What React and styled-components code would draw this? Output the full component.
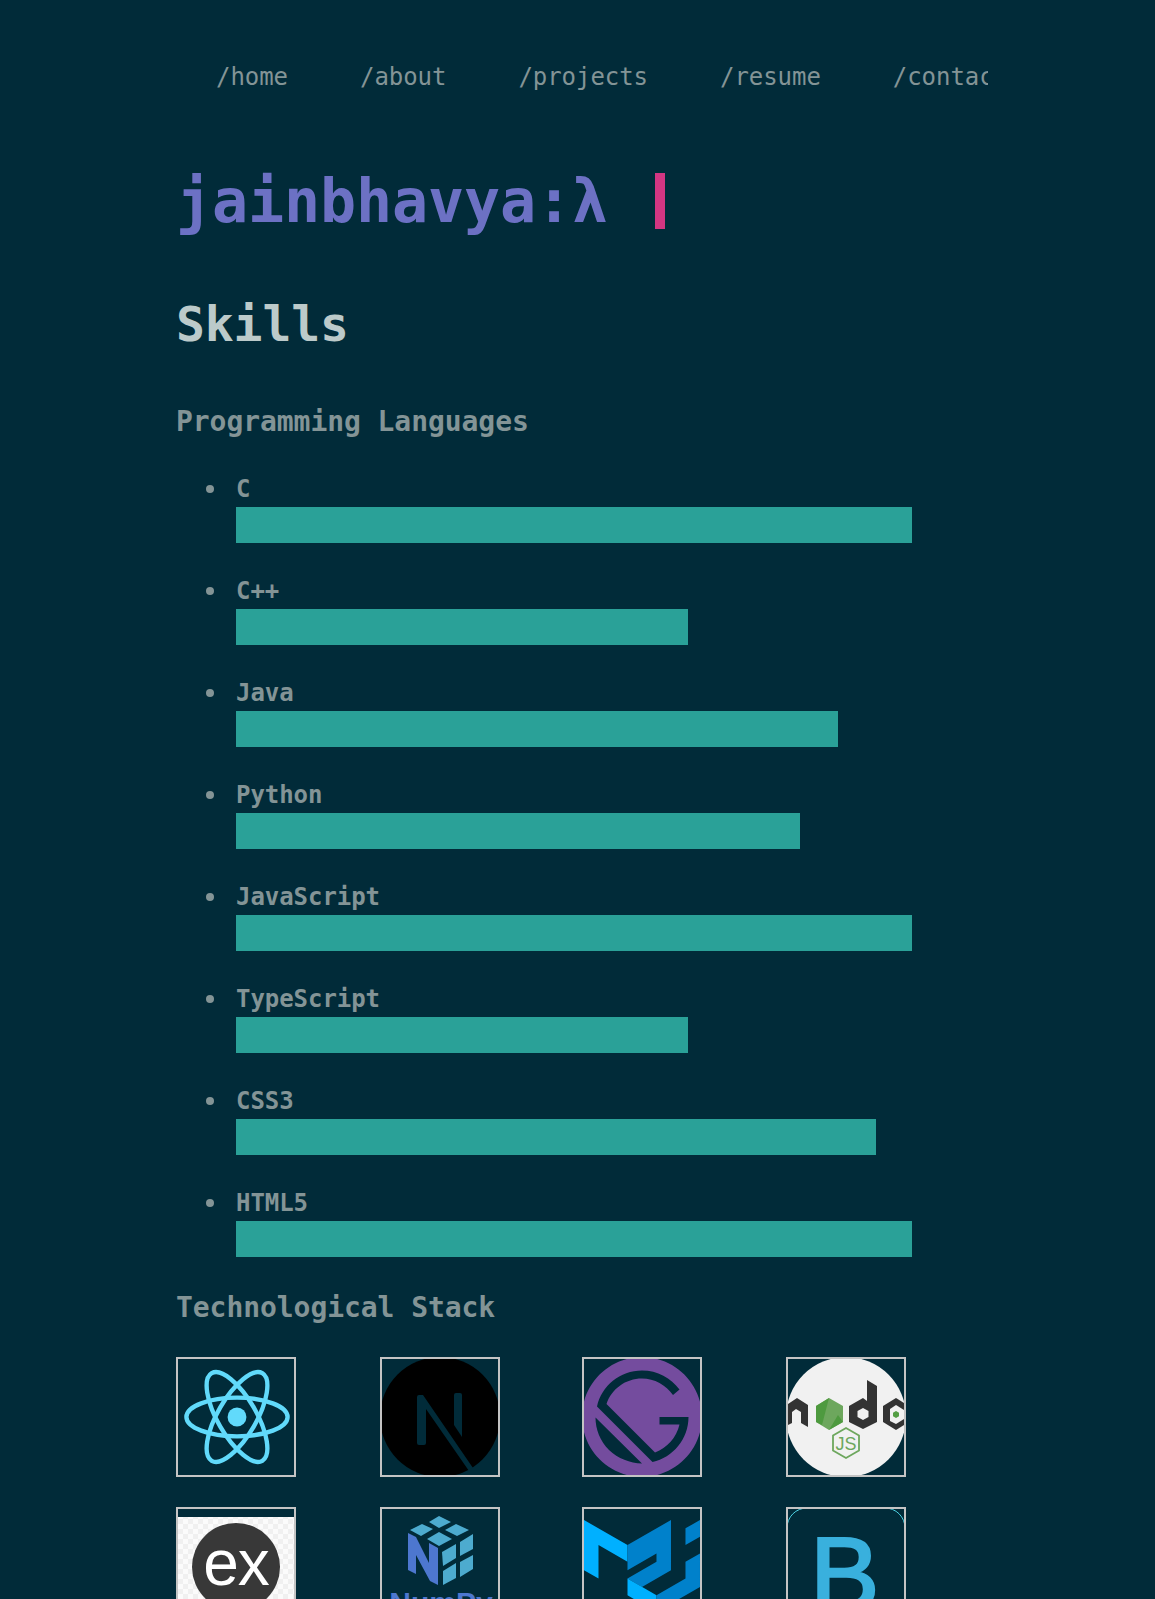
import React from 'react';
import styled, { createGlobalStyle } from 'styled-components';

const BG = '#012b39';

const GlobalStyle = createGlobalStyle`
  html, body {
    margin: 0;
    padding: 0;
    background: ${BG};
  }
`;

const Page = styled.div`
  height: 1599px;
  overflow: hidden;
  padding-left: 176px;
  box-sizing: border-box;
  font-family: "DejaVu Sans Mono", "Liberation Mono", monospace;
  background: ${BG};
`;

const Nav = styled.nav`
  display: flex;
  width: 808px;
  margin-left: 4px;
  padding-top: 60px;
  overflow: hidden;
  white-space: nowrap;
`;

const NavLink = styled.a`
  flex: none;
  padding: 0 36px;
  font-size: 24px;
  line-height: 34px;
  letter-spacing: -0.05px;
  color: #839496;
`;

const Title = styled.h1`
  display: flex;
  align-items: center;
  margin: 76px 0 0;
  height: 62px;
  font-size: 60px;
  font-weight: 700;
  line-height: 62px;
  letter-spacing: -0.12px;
  color: #6c71c4;
`;

const Cursor = styled.span`
  width: 10px;
  height: 56px;
  margin-left: 47px;
  background: #d33682;
`;

const SectionTitle = styled.h2`
  margin: 64px 0 0;
  font-size: 48px;
  font-weight: 700;
  line-height: 56px;
  letter-spacing: -0.1px;
  color: #bccaca;
`;

const SubTitle = styled.h3`
  margin: ${({ $top }) => $top}px 0 0;
  font-size: 28px;
  font-weight: 700;
  line-height: 36px;
  letter-spacing: -0.06px;
  color: #839496;
`;

const SkillList = styled.ul`
  width: 736px;
  margin: 32px 0 0;
  padding: 0 0 0 60px;
  box-sizing: border-box;
  list-style: none;
  color: #839496;
`;

const SkillItem = styled.li`
  position: relative;
  height: 102px;
  font-size: 24px;
  font-weight: 700;
  line-height: 34px;
  letter-spacing: -0.05px;

  &::before {
    content: "";
    position: absolute;
    left: -30px;
    top: 13px;
    width: 8px;
    height: 8px;
    border-radius: 50%;
    background: #839496;
  }
`;

const Bar = styled.div`
  height: 36px;
  margin-top: 1px;
  background: #2aa198;
`;

const IconGrid = styled.div`
  display: grid;
  grid-template-columns: 204px 202px 204px 120px;
  row-gap: 30px;
  margin-top: 31px;
`;

const IconBox = styled.div`
  width: 120px;
  height: 120px;
  box-sizing: border-box;
  border: 2px solid #c4c4c4;
  overflow: hidden;
`;

const Glyph = styled.svg`
  display: block;
  width: 116px;
  height: 116px;
`;

const ReactLogo = () => (
  <Glyph viewBox="0 0 116 116">
    <g transform="translate(59 58) scale(4.6)" fill="none" stroke="#61dafb" strokeWidth="0.95">
      <circle r="2.05" fill="#61dafb" stroke="none" />
      <ellipse rx="11" ry="4.2" />
      <ellipse rx="11" ry="4.2" transform="rotate(60)" />
      <ellipse rx="11" ry="4.2" transform="rotate(120)" />
    </g>
  </Glyph>
);

const NextLogo = () => (
  <Glyph viewBox="0 0 116 116">
    <circle cx="58" cy="58" r="60" fill="#000" />
    <path d="M35 38a2 2 0 0 1 2-2h4l50 73-4 3-43-62v34a2 2 0 0 1-2 2h-5a2 2 0 0 1-2-2z" fill={BG} />
    <path d="M72 36a2 2 0 0 1 2-2h4a2 2 0 0 1 2 2v42l-8-12z" fill={BG} />
  </Glyph>
);

const GatsbyLogo = () => (
  <Glyph viewBox="0.4 0.4 23.2 23.2">
    <path
      fill="#744c9e"
      d="M12 0C5.4 0 0 5.4 0 12s5.4 12 12 12 12-5.4 12-12S18.6 0 12 0zm-6.6 18.6C3.6 16.8 2.7 14.4 2.7 12.1l9.3 9.2c-2.4-.1-4.8-1-6.6-2.7zm8.7 2.4L3 9.9c.9-4.1 4.6-7.2 9-7.2 3.1 0 5.8 1.5 7.5 3.8l-1.3 1.1C16.8 5.6 14.5 4.3 12 4.3c-3.3 0-6.1 2.1-7.1 5.1l9.7 9.7c2.4-.9 4.3-3 4.9-5.6h-4V12h5.8c0 4.4-3.1 8.1-7.2 9z"
    />
  </Glyph>
);

const NodeLogo = () => (
  <Glyph viewBox="0 0 116 116">
    <circle cx="58" cy="58" r="60" fill="#f1f1f1" />
    {/* n */}
    <path fill="#333" d="M0 45l9-6 11 7v22l-7-4V53l-5-3-4 3v11l-4 2z" />
    {/* green hexagon */}
    <path fill="#6da75d" d="M41 39l14 8v16l-14 8-13-8V47z" />
    <path fill="#4e9a3f" d="M41 39L28 47v16l6 3z" />
    <path fill="#4e9a3f" d="M41 71l14-8-5-7z" />
    {/* d */}
    <path fill="#333" fillRule="evenodd" d="M79 21l10 6v36l-14 7-14-7V47l14-8 4 3zM75 49l-5.500 3v6l5.500 3 5.500-3v-6z" />
    {/* e */}
    <path fill="#333" d="M108 39l8 5v22l-8 5-13-8V47z" />
    <path fill="#f1f1f1" d="M102 50l6-4 8 5v9l-8 5-6-3z" />
    <path fill="#539e43" d="M108 52l3 1.700v3.600l-3 1.700-3-1.700v-3.600z" />
    {/* JS badge */}
    <path fill="none" stroke="#6da75d" strokeWidth="1.800" d="M58 69l13 7.500v15L58 99l-13-7.500v-15z" />
    <text x="58" y="91" textAnchor="middle" fontFamily="Liberation Sans, sans-serif" fontSize="18" fill="#6da75d">JS</text>
  </Glyph>
);

const ExpressLogo = () => (
  <Glyph viewBox="0 0 116 116">
    <defs>
      <pattern id="checks" width="10" height="10" patternUnits="userSpaceOnUse">
        <rect width="10" height="10" fill="#fbfbfb" />
        <rect width="5" height="5" fill="#f0f0f0" />
        <rect x="5" y="5" width="5" height="5" fill="#f0f0f0" />
      </pattern>
    </defs>
    <rect y="8" width="116" height="100" fill="url(#checks)" />
    <circle cx="58" cy="58" r="44" fill="#383838" />
    <text x="58" y="76" textAnchor="middle" fontFamily="Liberation Sans, sans-serif" fontSize="64" letterSpacing="-1" fill="#fff">ex</text>
  </Glyph>
);

const NumpyLogo = () => (
  <Glyph viewBox="0 0 116 116">
    <g fill="#4dabcf">
      <path d="M57 7l12 6-12 6-10-6z" />
      <path d="M40 15l11 5-12 7-11-6z" />
      <path d="M74 15l13 6-12 6-12-6z" />
      <path d="M57 23l13 7-13 7-12-7z" />
      <path d="M60 43l14-8v14l-13 8z" />
      <path d="M78 33l13-8v15l-13 7z" />
      <path d="M61 62l13-8v15l-13 7z" />
      <path d="M78 53l13-7v14l-13 8z" />
    </g>
    <path fill="#4d77cf" d="M26 24l8 4 13 26V34l9 5v37l-8-4-14-26v19l-8-4z" />
    <text x="59" y="104" textAnchor="middle" fontFamily="Liberation Sans, sans-serif" fontWeight="700" fontSize="30" fill="#4d77cf">NumPy</text>
  </Glyph>
);

const MuiLogo = () => (
  <Glyph viewBox="0 0 116 116">
    <g transform="translate(0 11) scale(0.1933)">
      <path fill="#00b0ff" d="M0 259.8V0l225 129.9v86.6L75 129.9v173.2z" />
      <path fill="#0081cb" d="M225 129.9L450 0v259.8l-150 86.6-75-43.3 150-86.6v-43.3l-150 86.6z" />
      <path fill="#00b0ff" d="M225 303.1v86.6l150 86.6v-86.6z" />
      <path fill="#0081cb" d="M375 476.3l225-129.9V173.2l-75 43.3v86.6l-150 86.6zM525 129.9V43.3L600 0v86.6z" />
    </g>
  </Glyph>
);

const BootstrapLogo = () => (
  <Glyph viewBox="0 0 116 116">
    <rect x="-1" y="-1" width="118" height="140" rx="20" fill="none" stroke="#4dd0e1" strokeWidth="1" />
    <text x="22" y="101" fontFamily="Liberation Sans, sans-serif" fontSize="104" fill="#39b0dd" stroke="#39b0dd" strokeWidth="2.500">B</text>
  </Glyph>
);

const skills = [
  { name: 'C', level: 100 },
  { name: 'C++', level: 66.9 },
  { name: 'Java', level: 89.1 },
  { name: 'Python', level: 83.5 },
  { name: 'JavaScript', level: 100 },
  { name: 'TypeScript', level: 66.9 },
  { name: 'CSS3', level: 94.7 },
  { name: 'HTML5', level: 100 },
];

const routes = ['/home', '/about', '/projects', '/resume', '/contact'];

const stack = [ReactLogo, NextLogo, GatsbyLogo, NodeLogo, ExpressLogo, NumpyLogo, MuiLogo, BootstrapLogo];

export default function App() {
  return (
    <>
      <GlobalStyle />
      <Page>
        <Nav>
          {routes.map((route) => (
            <NavLink key={route}>{route}</NavLink>
          ))}
        </Nav>
        <Title>
          jainbhavya:λ
          <Cursor />
        </Title>
        <SectionTitle>Skills</SectionTitle>
        <SubTitle $top={52}>Programming Languages</SubTitle>
        <SkillList>
          {skills.map((skill) => (
            <SkillItem key={skill.name}>
              {skill.name}
              <Bar style={{ width: `${skill.level}%` }} />
            </SkillItem>
          ))}
        </SkillList>
        <SubTitle $top={2}>Technological Stack</SubTitle>
        <IconGrid>
          {stack.map((Logo, i) => (
            <IconBox key={i}>
              <Logo />
            </IconBox>
          ))}
        </IconGrid>
      </Page>
    </>
  );
}
